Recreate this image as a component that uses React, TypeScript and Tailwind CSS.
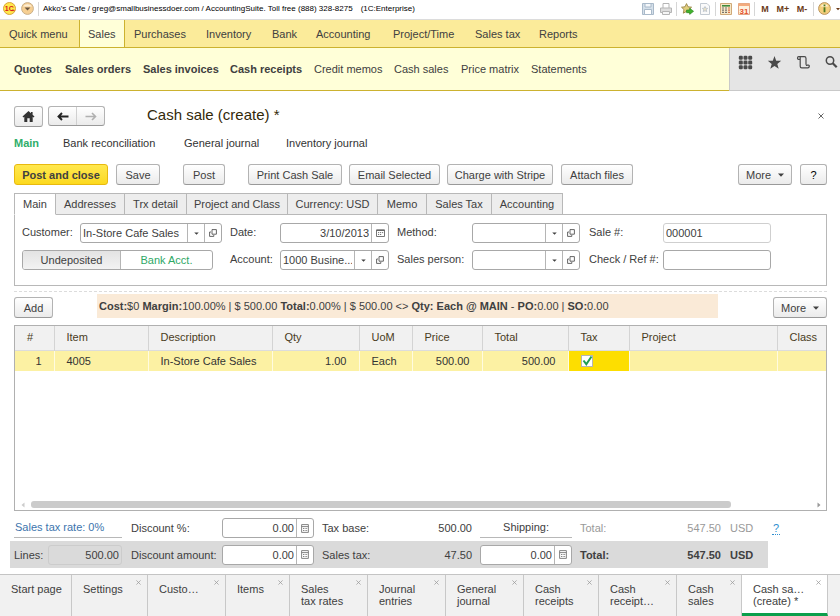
import React, { useState } from 'react';
import clsx from 'clsx';

const menuItems = [
  { label: 'Quick menu', width: 'w-[79px] pl-[9px]' },
  { label: 'Sales', width: 'w-[46px] pl-[8px]', active: true },
  { label: 'Purchases', width: 'w-[72px] pl-[9px]' },
  { label: 'Inventory', width: 'w-[66px] pl-[9px]' },
  { label: 'Bank', width: 'w-[44px] pl-[9px]' },
  { label: 'Accounting', width: 'w-[77px] pl-[9px]' },
  { label: 'Project/Time', width: 'w-[82px] pl-[9px]' },
  { label: 'Sales tax', width: 'w-[64px] pl-[9px]' },
  { label: 'Reports', width: 'w-[60px] pl-[9px]' },
];

const subMenuItems = [
  { label: 'Quotes', width: 'w-[51px]', bold: true },
  { label: 'Sales orders', width: 'w-[78px]', bold: true },
  { label: 'Sales invoices', width: 'w-[87px]', bold: true },
  { label: 'Cash receipts', width: 'w-[84px]', bold: true },
  { label: 'Credit memos', width: 'w-[80px]' },
  { label: 'Cash sales', width: 'w-[67px]' },
  { label: 'Price matrix', width: 'w-[70px]' },
  { label: 'Statements', width: 'w-[60px]' },
];

const formTabs = [
  { label: 'Main', width: 'w-[42px]' },
  { label: 'Addresses', width: 'w-[69px]' },
  { label: 'Trx detail', width: 'w-[62px]' },
  { label: 'Project and Class', width: 'w-[101px]' },
  { label: 'Currency: USD', width: 'w-[90px]' },
  { label: 'Memo', width: 'w-[49px]' },
  { label: 'Sales Tax', width: 'w-[65px]' },
  { label: 'Accounting', width: 'w-[71px]' },
];

const columns = [
  { label: '#', width: 'w-[39px]' },
  { label: 'Item', width: 'w-[94px]' },
  { label: 'Description', width: 'w-[124px]' },
  { label: 'Qty', width: 'w-[87px]' },
  { label: 'UoM', width: 'w-[53px]' },
  { label: 'Price', width: 'w-[70px]' },
  { label: 'Total', width: 'w-[86px]' },
  { label: 'Tax', width: 'w-[61px]' },
  { label: 'Project', width: 'w-[148px]' },
  { label: 'Class', width: '' },
];

const windowTabs = [
  { lines: ['Start page'], width: 'w-[72px]', closable: false },
  { lines: ['Settings'], width: 'w-[76px]', closable: true },
  { lines: ['Custo…'], width: 'w-[78px]', closable: true },
  { lines: ['Items'], width: 'w-[64px]', closable: true },
  { lines: ['Sales', 'tax rates'], width: 'w-[78px]', closable: true },
  { lines: ['Journal', 'entries'], width: 'w-[78px]', closable: true },
  { lines: ['General', 'journal'], width: 'w-[78px]', closable: true },
  { lines: ['Cash', 'receipts'], width: 'w-[75px]', closable: true },
  { lines: ['Cash', 'receipt…'], width: 'w-[78px]', closable: true },
  { lines: ['Cash', 'sales'], width: 'w-[65px]', closable: true },
  { lines: ['Cash sa…', '(create) *'], width: 'w-[86px]', closable: true, active: true },
];

const Caret = ({ className = '' }: { className?: string }) => (
  <svg className={className} width="6" height="4" viewBox="0 0 6 4" fill="currentColor">
    <path d="M0 0.5h6L3 3.8z" />
  </svg>
);

const CloseIcon = ({ size = 6 }: { size?: number }) => (
  <svg width={size} height={size} viewBox="0 0 6 6" stroke="currentColor" strokeWidth="0.9">
    <path d="M0.5 0.5l5 5M5.5 0.5l-5 5" />
  </svg>
);

const OpenIcon = () => (
  <svg width="8" height="8" viewBox="0 0 8 8" fill="none" stroke="#555" strokeWidth="0.9">
    <path d="M3 0.6h4.4v4.6H3z" />
    <path d="M2 3H0.6v4.4h4.2V6" />
  </svg>
);

const CalendarIcon = () => (
  <svg width="9" height="8" viewBox="0 0 9 8" fill="none" stroke="#666" strokeWidth="0.9">
    <path d="M0.5 0.9h8v6.6h-8z" />
    <path d="M0.5 1.3h8" strokeWidth="1.2" />
    <path d="M2 3.6h1.2M4 3.6h1.2M6 3.6h1.2M2 5.5h1.2M4 5.5h1.2" />
  </svg>
);

const CalcIcon = () => (
  <svg width="8" height="9" viewBox="0 0 8 9" fill="none" stroke="#777" strokeWidth="0.9">
    <path d="M0.6 0.6h6.8v7.8H0.6z" />
    <path d="M0.6 2.6h6.8" />
    <path d="M2 4.5h1M3.6 4.5h1M5.2 4.5h1M2 6.5h1M3.6 6.5h1M5.2 6.5h1" />
  </svg>
);

const Divider = () => <span className="-mx-px h-[14px] w-px bg-[#d6d6d6]" />;

interface ButtonProps {
  children: React.ReactNode;
  className?: string;
  label?: string;
  primary?: boolean;
}

const Button = ({ children, className, label, primary }: ButtonProps) => (
  <button
    type="button"
    aria-label={label}
    className={clsx(
      'flex h-[21px] shrink-0 items-center justify-center rounded-[3px] border bg-gradient-to-b whitespace-nowrap',
      primary
        ? 'border-[#e8b90f] from-[#ffe84d] to-[#fcd91c] font-bold'
        : 'border-[#b3b3b3] border-b-[#999] from-white to-[#ebebeb]',
      className
    )}
  >
    {children}
  </button>
);

interface FieldProps {
  id: string;
  value?: string;
  icons?: ('caret' | 'open' | 'calendar' | 'calc')[];
  right?: boolean;
  tone?: 'normal' | 'light' | 'readonly';
  className?: string;
}

const iconLabels = { caret: 'Choose', open: 'Open', calendar: 'Calendar', calc: 'Calculator' };

const fieldTones = {
  normal: 'border-[#a8a8a8] bg-white',
  light: 'border-[#cfcfcf] bg-white',
  readonly: 'border-[#cccccc] bg-[#dadada]',
};

const Field = ({ id, value = '', icons = [], right, tone = 'normal', className }: FieldProps) => (
  <div className={clsx('flex h-[20px] overflow-hidden rounded-[3px] border', fieldTones[tone], className)}>
    <input
      id={id}
      defaultValue={value}
      readOnly={tone === 'readonly'}
      className={clsx('w-0 min-w-0 flex-1 bg-transparent px-[2px] outline-none', right && 'text-right')}
    />
    {icons.map((icon) => (
      <button
        key={icon}
        type="button"
        aria-label={iconLabels[icon]}
        className="flex w-[17px] items-center justify-center border-l border-[#b5b5b5]"
      >
        {icon === 'caret' && <Caret className="h-[3px] w-[5px]" />}
        {icon === 'open' && <OpenIcon />}
        {icon === 'calendar' && <CalendarIcon />}
        {icon === 'calc' && <CalcIcon />}
      </button>
    ))}
  </div>
);

const TopBar = () => (
  <header className="flex h-[20px] items-center border-b border-[#dcdcdc] bg-white pb-[2px] pl-[3px] text-[8px] text-black">
    <svg width="13" height="13" viewBox="0 0 13 13">
      <circle cx="6.5" cy="6.5" r="6" fill="#ffe84a" stroke="#d9a33a" />
      <text x="6.3" y="9" textAnchor="middle" fontSize="7" fontWeight="bold" fill="#d8201c">1C</text>
      <path d="M8 8.600h3.500" stroke="#d8201c" strokeWidth="0.900" />
    </svg>
    <button type="button" aria-label="Main menu" className="ml-[5px]">
      <svg width="13" height="13" viewBox="0 0 13 13">
        <circle cx="6.5" cy="6.5" r="5.9" fill="#f6cf92" stroke="#c9b08c" />
        <path d="M2 4.6a5 4 0 0 1 9 0z" fill="#fdeed6" />
        <path d="M3.6 5.4h5.8L6.5 8.4z" fill="#6b5640" />
      </svg>
    </button>
    <span className="ml-[4px] h-[14px] w-px bg-[#d6d6d6]" />
    <span className="ml-[4px] whitespace-nowrap">
      Akko's Cafe / greg@smallbusinessdoer.com / AccountingSuite. Toll free (888) 328-8275
    </span>
    <span className="ml-[8px] whitespace-nowrap">(1C:Enterprise)</span>
    <div className="ml-auto flex shrink-0 items-center gap-[5px] text-[9px] font-bold text-[#6b3a17]">
      <button type="button" aria-label="Save">
        <svg width="12" height="12" viewBox="0 0 12 12" stroke="#a9b9c9">
          <path d="M0.5 0.5h11v11h-11z" fill="#d5e0ea" />
          <path d="M3 0.5h6v3.5H3z" fill="#f5f8fb" />
          <path d="M2.5 6.5h7v5h-7z" fill="#fff" />
        </svg>
      </button>
      <button type="button" aria-label="Print" className="ml-[1px]">
        <svg width="12" height="12" viewBox="0 0 12 12" stroke="#b5b5b5">
          <path d="M3 0.5h6v5H3z" fill="#fff" />
          <path d="M0.5 5h11v4.500h-11z" fill="#dedede" />
          <path d="M2.500 8.500h7v3h-7z" fill="#f6f6f6" />
        </svg>
      </button>
      <Divider />
      <button type="button" aria-label="Add to favorites">
        <svg width="13" height="12" viewBox="0 0 13 12">
          <path d="M5.500 0.600l1.500 3.200 3.600.4-2.600 2.400.7 3.600-3.200-1.800-3.200 1.800.7-3.600L.5 4.200l3.500-.4z" fill="#e2cf7e" stroke="#9a8648" strokeWidth="0.9" />
          <path d="M5.500 7h3.200V5.200L12.600 8.300 8.700 11.400V9.700H5.500z" fill="#41b32e" stroke="#2b8420" strokeWidth="0.6" />
        </svg>
      </button>
      <button type="button" aria-label="Favorites">
        <svg width="12" height="12" viewBox="0 0 12 12" fill="none" stroke="#c3cad2">
          <path d="M1.500 0.500h6.500l2.500 2.500v8.500h-9z" fill="#fafafa" />
          <path d="M6 3.500l.8 1.700 1.900.2-1.400 1.300.4 1.900L6 7.700l-1.700.9.4-1.900-1.400-1.300 1.900-.2z" fill="#e9e2c5" />
        </svg>
      </button>
      <Divider />
      <button type="button" aria-label="Calculator">
        <svg width="12" height="12" viewBox="0 0 12 12">
          <path d="M0.500 0.500h11v11h-11z" fill="#f6e7c6" stroke="#cfa978" />
          <path d="M2 2h8v1.600H2z" fill="#3f8a3d" />
          <path d="M2.200 5h1.600M5.200 5h1.600M2.200 7.200h1.600M5.200 7.200h1.600M2.200 9.400h1.600M5.200 9.400h1.600" stroke="#555" strokeWidth="1.200" />
          <path d="M8.200 5h1.600M8.200 7.200h1.600M8.200 9.400h1.600" stroke="#d0562a" strokeWidth="1.200" />
        </svg>
      </button>
      <button type="button" aria-label="Calendar" className="ml-[1px]">
        <svg width="12" height="12" viewBox="0 0 12 12">
          <path d="M0.500 0.500h11v11h-11z" fill="#fff3e0" stroke="#e0a888" />
          <path d="M0.500 0.500h11v2.500h-11z" fill="#f3ab7d" />
          <text x="6" y="10.500" textAnchor="middle" fontSize="8" fontWeight="bold" fill="#e5502b">31</text>
        </svg>
      </button>
      <Divider />
      <button type="button" className="w-[12px]">M</button>
      <button type="button" className="w-[14px]">M+</button>
      <button type="button" className="w-[14px]">M-</button>
      <Divider />
      <button type="button" aria-label="Information">
        <svg width="13" height="13" viewBox="0 0 13 13">
          <circle cx="6.500" cy="6.500" r="5.900" fill="#f4cf7c" stroke="#bb9560" />
          <path d="M2.500 4.500a4.500 4 0 0 1 8 0z" fill="#fdf1d4" />
          <path d="M5.600 5.300h1.800v5H5.600zM5.600 2.600h1.800v1.700H5.600z" fill="#4f7a21" />
        </svg>
      </button>
      <Caret className="w-[4px]" />
    </div>
  </header>
);

const MainMenu = () => (
  <nav className="flex h-[28px] border-b border-[#ccb22f] bg-[#fbeb9a]">
    {menuItems.map((item) => (
      <a
        key={item.label}
        href="#"
        className={clsx(
          'flex items-center whitespace-nowrap',
          item.width,
          item.active && 'border-x border-[#ccb22f] bg-[#ffffd8]'
        )}
      >
        {item.label}
      </a>
    ))}
  </nav>
);

const SubMenu = () => (
  <div className="flex h-[43px]">
    <nav className="flex flex-1 border-b border-[#ccb22f] bg-[#ffffd8] pl-[14px]">
      {subMenuItems.map((item) => (
        <a
          key={item.label}
          href="#"
          className={clsx('flex items-center whitespace-nowrap', item.width, item.bold && 'font-bold')}
        >
          {item.label}
        </a>
      ))}
    </nav>
    <div className="flex w-[111px] shrink-0 items-start gap-[14px] border-b border-l border-[#c9c9c9] bg-[#e5e5e5] pt-[7px] pl-[8px] text-[#4a4a4a]">
      <button type="button" aria-label="Sections" className="shrink-0">
        <svg width="15" height="15" viewBox="0 0 15 15" fill="currentColor">
          {[0.8, 5.5, 10.2].map((y) =>
            [0.8, 5.5, 10.2].map((x) => <rect key={`${x}-${y}`} x={x} y={y} width="4" height="4" rx="1.3" />)
          )}
        </svg>
      </button>
      <button type="button" aria-label="Favorites" className="shrink-0">
        <svg width="15" height="15" viewBox="0 0 15 15" fill="currentColor">
          <path d="M7.500 1l1.700 4.700 5 .1-3.900 3.100 1.400 4.900-4.200-2.900-4.200 2.900 1.400-4.900L.8 5.800l5-.1z" />
        </svg>
      </button>
      <button type="button" aria-label="History" className="shrink-0">
        <svg width="15" height="15" viewBox="0 0 15 15" fill="none" stroke="currentColor" strokeWidth="1.200">
          <path d="M4 4.300H2.400c-1.100 0-1.300-2.600.2-2.600h5.800c1.200 0 1.600.7 1.600 1.800v6.300" />
          <path d="M4.200 2v9.200c0 1 .6 1.600 1.500 1.600h6.200c1.700 0 1.800-2.700.6-2.700h-2v1" />
        </svg>
      </button>
      <button type="button" aria-label="Search" className="shrink-0">
        <svg width="13" height="15" viewBox="0 0 13 15" fill="none" stroke="currentColor">
          <circle cx="5" cy="5.500" r="3.700" strokeWidth="1.500" />
          <path d="M7.700 8.200l4 4" strokeWidth="2.200" />
        </svg>
      </button>
    </div>
  </div>
);

const App = () => {
  const [activeTab, setActiveTab] = useState('Main');
  const [payment, setPayment] = useState('Undeposited');
  const [taxable, setTaxable] = useState(true);

  return (
    <div className="flex min-h-screen flex-col overflow-hidden bg-white font-['Liberation_Sans',Arial,sans-serif] text-[11px] leading-[12px] text-[#404040]">
      <TopBar />
      <MainMenu />
      <SubMenu />

      <main className="flex flex-1 flex-col pr-[13px] pl-[14px]">
        {/* Title row */}
        <div className="mt-[15px] flex h-[20px] items-center">
          <Button className="h-[20px] w-[29px]" label="Home">
            <svg width="13" height="11" viewBox="0 0 13 11" fill="#333">
              <path d="M6.500 0L0.500 5.500l.9 1 .9-.8V11h3V7.300h2.400V11h3V5.700l.9.8.9-1-1.900-1.700V1H9v1.200z" />
            </svg>
          </Button>
          <div className="ml-[5px] flex h-[20px] rounded-[3px] border border-[#b3b3b3] border-b-[#999] bg-gradient-to-b from-white to-[#ebebeb]">
            <button type="button" aria-label="Back" className="flex w-[28px] items-center justify-center border-r border-[#d0d0d0]">
              <svg width="12" height="9" viewBox="0 0 12 9" fill="none" stroke="#222" strokeWidth="1.900">
                <path d="M11.500 4.500H1.500M5 1L1.500 4.500 5 8" />
              </svg>
            </button>
            <button type="button" aria-label="Forward" className="flex w-[27px] items-center justify-center">
              <svg width="12" height="9" viewBox="0 0 12 9" fill="none" stroke="#b0b0b0" strokeWidth="1.600">
                <path d="M0.500 4.500h10M7 1l3.500 3.500L7 8" />
              </svg>
            </button>
          </div>
          <h1 className="ml-[42px] pb-[2px] text-[15px] leading-[18px] text-[#33290a]">Cash sale (create) *</h1>
          <button type="button" aria-label="Close" className="mr-[3px] ml-auto text-[#555]">
            <CloseIcon />
          </button>
        </div>

        <nav className="mt-[10px] flex h-[14px] items-center text-[#333]">
          <a href="#" className="w-[49px] font-bold text-[#2fae6a]">Main</a>
          <a href="#" className="w-[121px]">Bank reconciliation</a>
          <a href="#" className="w-[102px]">General journal</a>
          <a href="#">Inventory journal</a>
        </nav>

        {/* Command bar */}
        <div className="mt-[14px] flex">
          <Button primary className="w-[94px]">Post and close</Button>
          <Button className="ml-[8px] w-[44px]">Save</Button>
          <Button className="ml-[23px] w-[42px]">Post</Button>
          <Button className="ml-[23px] w-[94px]">Print Cash Sale</Button>
          <Button className="ml-[7px] w-[91px]">Email Selected</Button>
          <Button className="ml-[7px] w-[106px]">Charge with Stripe</Button>
          <Button className="ml-[8px] w-[72px]">Attach files</Button>
          <Button className="ml-auto w-[54px] gap-[7px]">More <Caret /></Button>
          <Button className="ml-[8px] w-[27px] text-black">?</Button>
        </div>

        {/* Form tabs */}
        <div role="tablist" className="mt-[8px] flex">
          {formTabs.map((tab, index) => (
            <button
              key={tab.label}
              type="button"
              role="tab"
              aria-selected={activeTab === tab.label}
              onClick={() => setActiveTab(tab.label)}
              className={clsx(
                'h-[22px] border-y border-r border-[#b8b8b8] whitespace-nowrap',
                index === 0 && 'border-l',
                activeTab === tab.label ? 'border-b-white bg-white' : 'bg-[#ededed]',
                tab.width
              )}
            >
              {tab.label}
            </button>
          ))}
          <div className="flex-1 border-b border-[#b8b8b8]" />
        </div>
        <div className="grid grid-cols-[58px_142px_50px_108px_76px_108px_74px_108px] gap-y-[7px] border border-t-0 border-[#b8b8b8] px-[7px] pt-[8px] pb-[15px]">
          <label htmlFor="customer" className="pt-[3px]">Customer:</label>
          <Field id="customer" value="In-Store Cafe Sales" icons={['caret', 'open']} />
          <label htmlFor="date" className="pt-[3px] pl-[8px]">Date:</label>
          <Field id="date" value="3/10/2013" icons={['calendar']} right className="ml-[8px] w-[109px]" />
          <label htmlFor="method" className="pt-[3px] pl-[17px]">Method:</label>
          <Field id="method" icons={['caret', 'open']} className="ml-[16px] w-[108px]" />
          <label htmlFor="sale-number" className="pt-[3px] pl-[25px] whitespace-nowrap">Sale #:</label>
          <Field id="sale-number" value="000001" tone="light" className="ml-[25px] w-[108px]" />

          <div className="col-span-2 flex h-[20px] w-[191px] overflow-hidden rounded-[3px] border border-[#a8a8a8]">
            <button
              type="button"
              aria-pressed={payment === 'Undeposited'}
              onClick={() => setPayment('Undeposited')}
              className={clsx('flex-1 border-r border-[#b5b5b5]', payment === 'Undeposited' ? 'bg-gradient-to-b from-[#e3e3e3] to-[#f3f3f3]' : 'text-[#2fa866]')}
            >
              Undeposited
            </button>
            <button
              type="button"
              aria-pressed={payment === 'Bank Acct.'}
              onClick={() => setPayment('Bank Acct.')}
              className={clsx('w-[91px]', payment === 'Bank Acct.' ? 'bg-gradient-to-b from-[#e3e3e3] to-[#f3f3f3]' : 'text-[#2fa866]')}
            >
              Bank Acct.
            </button>
          </div>
          <label htmlFor="account" className="pt-[3px] pl-[8px]">Account:</label>
          <Field id="account" value="1000 Busine..." icons={['caret', 'open']} className="ml-[8px] w-[109px]" />
          <label htmlFor="sales-person" className="pt-[3px] pl-[17px] whitespace-nowrap">Sales person:</label>
          <Field id="sales-person" icons={['caret', 'open']} className="ml-[16px] w-[108px]" />
          <label htmlFor="check-ref" className="pt-[3px] pl-[25px] whitespace-nowrap">Check / Ref #:</label>
          <Field id="check-ref" className="ml-[25px] w-[108px]" />
        </div>

        <div className="mt-[5px] border-t border-dashed border-[#dcdcdc]" />

        {/* Line items toolbar */}
        <div className="mt-[2px] flex h-[24px] items-start">
          <Button className="mt-[3px] w-[39px]">Add</Button>
          <p className="mr-[55px] ml-[44px] h-[24px] flex-1 bg-[#faead7] pt-[6px] pl-[2px] whitespace-nowrap">
            <b>Cost:</b>$0 <b>Margin:</b>100.00% | $ 500.00 <b>Total:</b>0.00% | $ 500.00 &lt;&gt;{' '}
            <b>Qty: Each @ MAIN</b> - <b>PO:</b>0.00 | <b>SO:</b>0.00
          </p>
          <Button className="mt-[3px] w-[54px] gap-[7px]">More <Caret /></Button>
        </div>

        <div className="mt-[7px] flex min-h-[150px] flex-1 flex-col border border-[#b0b0b0]">
          <table className="w-full table-fixed border-collapse text-left">
            <thead>
              <tr className="h-[24px] border-b border-[#dcdcdc] bg-[#f1f1f1] text-[#4a3c1c]">
                {columns.map((column) => (
                  <th
                    key={column.label}
                    className={clsx('border-r border-[#d4d4d4] pb-[2px] pl-[12px] font-normal last:border-r-0', column.width)}
                  >
                    {column.label}
                  </th>
                ))}
              </tr>
            </thead>
            <tbody>
              <tr className="h-[21px] bg-[#fcf1a3] text-[#333] *:border-r *:border-[#fffbe0] *:px-[12px] *:last:border-r-0">
                <td className="text-right">1</td>
                <td>4005</td>
                <td className="whitespace-nowrap">In-Store Cafe Sales</td>
                <td className="text-right">1.00</td>
                <td>Each</td>
                <td className="text-right">500.00</td>
                <td className="text-right">500.00</td>
                <td className="bg-[#fdde00]">
                  <label className="relative block h-[12px] w-[12px]">
                    <input
                      type="checkbox"
                      aria-label="Tax"
                      checked={taxable}
                      onChange={(e) => setTaxable(e.target.checked)}
                      className="block h-[12px] w-[12px] appearance-none border border-[#b5b5b5] bg-white"
                    />
                    {taxable && (
                      <svg className="pointer-events-none absolute inset-0" width="12" height="12" viewBox="0 0 12 12" fill="none" stroke="#1f9e55" strokeWidth="2">
                        <path d="M2.500 5.500l2.800 3.700L10.500 1.500" />
                      </svg>
                    )}
                  </label>
                </td>
                <td />
                <td />
              </tr>
            </tbody>
          </table>
          <div className="mt-auto mb-[2px] flex h-[7px] items-center pr-[5px] pl-[6px]">
            <svg width="4" height="6" viewBox="0 0 4 6" fill="#ccc"><path d="M3.500 0.500v5L0.500 3z" /></svg>
            <div className="mr-[86px] ml-[6px] h-[7px] flex-1 rounded-[3px] bg-[#cbcbcb]" />
            <svg width="4" height="6" viewBox="0 0 4 6" fill="#999"><path d="M0.500 0.500v5L3.500 3z" /></svg>
          </div>
        </div>

        {/* Totals */}
        <div className="-ml-[4px] flex flex-col items-start pt-[4px] pb-[6px]">
          <div className="grid h-[26px] grid-cols-[112px_100px_92px_79px_79px_100px_77px_72px_47px_30px] items-center">
            <a href="#" className="ml-[4px] flex h-[20px] items-center border-b border-[#b8b8b8] pb-[2px] pl-[1px] text-[#3c74ad]">Sales tax rate: 0%</a>
            <label htmlFor="discount-percent" className="pl-[9px]">Discount %:</label>
            <Field id="discount-percent" value="0.00" icons={['calc']} right />
            <span className="pl-[8px] whitespace-nowrap">Tax base:</span>
            <span className="text-right">500.00</span>
            <label htmlFor="shipping" className="ml-[8px] flex h-[20px] items-center justify-center border-b border-[#b8b8b8] pb-[2px]">Shipping:</label>
            <span className="pl-[8px] text-[#999]">Total:</span>
            <span className="text-right text-[#999]">547.50</span>
            <span className="pl-[9px] text-[#999]">USD</span>
            <a href="#" className="ml-[4px] w-[8px] border-b border-dotted border-[#2f8fd0] text-center text-[#2f8fd0]">?</a>
          </div>
          <div className="grid h-[27px] grid-cols-[38px_74px_100px_92px_79px_79px_100px_77px_72px_47px] items-center bg-[#dadada]">
            <label htmlFor="lines" className="pl-[4px]">Lines:</label>
            <Field id="lines" value="500.00" right tone="readonly" />
            <label htmlFor="discount-amount" className="pl-[9px] whitespace-nowrap">Discount amount:</label>
            <Field id="discount-amount" value="0.00" icons={['calc']} right />
            <span className="pl-[8px] whitespace-nowrap">Sales tax:</span>
            <span className="text-right">47.50</span>
            <Field id="shipping" value="0.00" icons={['calc']} right className="ml-[8px]" />
            <b className="pl-[8px]">Total:</b>
            <b className="text-right">547.50</b>
            <b className="pl-[9px]">USD</b>
          </div>
        </div>
      </main>

      {/* Open windows */}
      <footer className="flex h-[42px] border-t border-[#c4c4c4] bg-[#f1f1f1]">
        {windowTabs.map((tab, index) => (
          <div
            key={index}
            className={clsx(
              'relative shrink-0 border-r border-[#c8c8c8] pt-[8px] pl-[11px]',
              tab.width,
              tab.active && 'border-b-[3px] border-b-[#0c9f4c] bg-white'
            )}
          >
            <a href="#" className="block">
              {tab.lines.map((line) => (
                <span key={line} className="block whitespace-nowrap">{line}</span>
              ))}
            </a>
            {tab.closable && (
              <button type="button" aria-label="Close tab" className="absolute top-[5px] right-[6px] text-[#999]">
                <CloseIcon size={5} />
              </button>
            )}
          </div>
        ))}
      </footer>
    </div>
  );
};

export default App;
